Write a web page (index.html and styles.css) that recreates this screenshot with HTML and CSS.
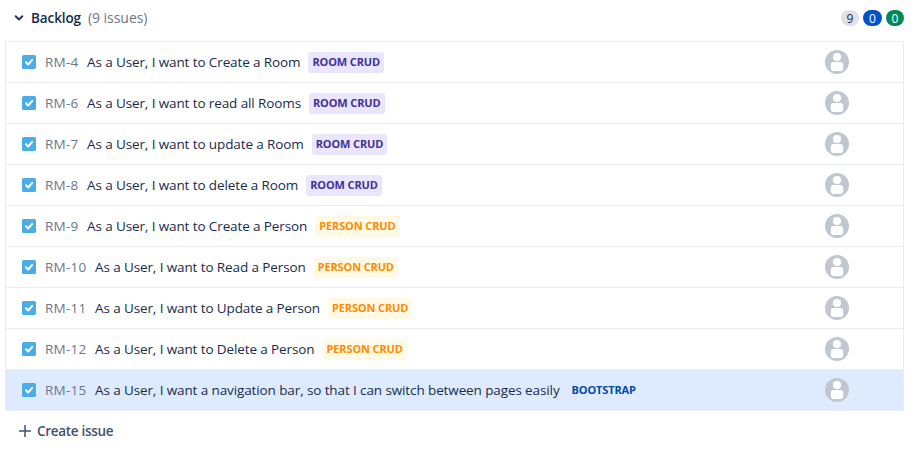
FILE: index.html
```
<!DOCTYPE html>
<html lang="en">
<head>
<meta charset="utf-8">
<title>Backlog</title>
<link rel="stylesheet" href="styles.css">
</head>
<body>
<svg width="0" height="0" class="defs">
  <symbol id="task" viewBox="0 0 14 14"><rect width="14" height="14" rx="1.6" fill="#4bade8"/><path d="M4 7.3 6.2 9.500 10.200 4.900" fill="none" stroke="#fff" stroke-width="2" stroke-linecap="round" stroke-linejoin="round"/></symbol>
  <symbol id="person" viewBox="0 0 24 24"><circle cx="12" cy="12" r="12" fill="#c1c7d0"/><circle cx="12" cy="7" r="4.100" fill="#fff"/><rect x="5.800" y="12" width="12.400" height="9" rx="2.800" fill="#fff"/></symbol>
</svg>
<header class="header">
  <svg class="chevron" viewBox="0 0 10 8"><path d="M1.700 2.200 5 5.500 8.300 2.200" fill="none" stroke="#253858" stroke-width="2" stroke-linecap="round" stroke-linejoin="round"/></svg>
  <h1 class="title">Backlog</h1>
  <span class="count">(9 issues)</span>
  <div class="badges"><span class="badge todo">9</span><span class="badge progress">0</span><span class="badge done">0</span></div>
</header>
<main class="list">
  <div class="row"><svg class="task"><use href="#task"/></svg><span class="key">RM-4</span><span class="summary">As a User, I want to Create a Room</span><span class="epic room">ROOM CRUD</span><svg class="avatar"><use href="#person"/></svg></div>
  <div class="row"><svg class="task"><use href="#task"/></svg><span class="key">RM-6</span><span class="summary">As a User, I want to read all Rooms</span><span class="epic room">ROOM CRUD</span><svg class="avatar"><use href="#person"/></svg></div>
  <div class="row"><svg class="task"><use href="#task"/></svg><span class="key">RM-7</span><span class="summary">As a User, I want to update a Room</span><span class="epic room">ROOM CRUD</span><svg class="avatar"><use href="#person"/></svg></div>
  <div class="row"><svg class="task"><use href="#task"/></svg><span class="key">RM-8</span><span class="summary">As a User, I want to delete a Room</span><span class="epic room">ROOM CRUD</span><svg class="avatar"><use href="#person"/></svg></div>
  <div class="row"><svg class="task"><use href="#task"/></svg><span class="key">RM-9</span><span class="summary">As a User, I want to Create a Person</span><span class="epic people">PERSON CRUD</span><svg class="avatar"><use href="#person"/></svg></div>
  <div class="row"><svg class="task"><use href="#task"/></svg><span class="key long">RM-10</span><span class="summary">As a User, I want to Read a Person</span><span class="epic people">PERSON CRUD</span><svg class="avatar"><use href="#person"/></svg></div>
  <div class="row"><svg class="task"><use href="#task"/></svg><span class="key long">RM-11</span><span class="summary">As a User, I want to Update a Person</span><span class="epic people">PERSON CRUD</span><svg class="avatar"><use href="#person"/></svg></div>
  <div class="row"><svg class="task"><use href="#task"/></svg><span class="key long">RM-12</span><span class="summary">As a User, I want to Delete a Person</span><span class="epic people">PERSON CRUD</span><svg class="avatar"><use href="#person"/></svg></div>
  <div class="row selected"><svg class="task"><use href="#task"/></svg><span class="key long">RM-15</span><span class="summary">As a User, I want a navigation bar, so that I can switch between pages easily</span><span class="epic bootstrap">BOOTSTRAP</span><svg class="avatar"><use href="#person"/></svg></div>
</main>
<footer class="create"><svg class="plus" viewBox="0 0 12 12"><path d="M6 .5v11M.5 6h11" stroke="#42526e" stroke-width="1.500" stroke-linecap="round"/></svg><span>Create issue</span></footer>
</body>
</html>
```
FILE: styles.css
```
* { box-sizing: border-box; }
body {
  margin: 0;
  background: #fff;
  color: #172b4d;
  font: 13.5px/20px "Open Sans", sans-serif;
}
.defs { position: absolute; }
svg { display: block; flex: none; }
.header {
  display: flex;
  align-items: center;
  height: 41px;
  padding: 0 12px 5px 14px;
}
.chevron { width: 10px; height: 8px; }
.title { margin: 0 0 0 7px; width: 57px; font-size: 13.5px; line-height: 20px; font-weight: 600; letter-spacing: -0.1px; white-space: nowrap; }
.count { color: #6b778c; font-size: 14px; letter-spacing: -0.05px; }
.badges { display: flex; gap: 4px; margin-left: auto; }
.badge {
  width: 18px;
  height: 16px;
  border-radius: 8px;
  font-size: 12px;
  line-height: 17px;
  text-align: center;
}
.todo { background: #dfe1e6; }
.progress { width: 19px; background: #0052cc; color: #fff; }
.done { background: #00875a; color: #fff; }
.list {
  width: 899px;
  margin-left: 5px;
  border: solid #ebecf0;
  border-width: 1px 1px 0;
}
.row {
  display: flex;
  align-items: center;
  height: 41px;
  padding: 0 54px 0 16px;
  border-bottom: 1px solid #ebecf0;
  white-space: nowrap;
}
.selected { background: #deebff; }
.task { width: 14px; height: 14px; }
.key { width: 42px; margin-left: 9px; color: #6b778c; letter-spacing: 0.25px; }
.long { width: 50px; }
.summary { letter-spacing: -0.11px; }
.epic {
  height: 21px;
  margin-left: 8px;
  padding: 0 4px;
  border-radius: 3px;
  font-size: 11px;
  line-height: 20px;
  font-weight: 700;
  letter-spacing: -0.13px;
}
.room { background: #eae6ff; color: #403294; }
.people { background: #fffae6; color: #ff8b00; }
.bootstrap { color: #0747a6; }
.avatar { width: 24px; height: 24px; margin-left: auto; }
.create {
  display: flex;
  align-items: center;
  gap: 6px;
  height: 40px;
  padding-left: 19px;
  color: #42526e;
  font-weight: 600;
  letter-spacing: -0.3px;
}
.plus { width: 12px; height: 12px; }
```
